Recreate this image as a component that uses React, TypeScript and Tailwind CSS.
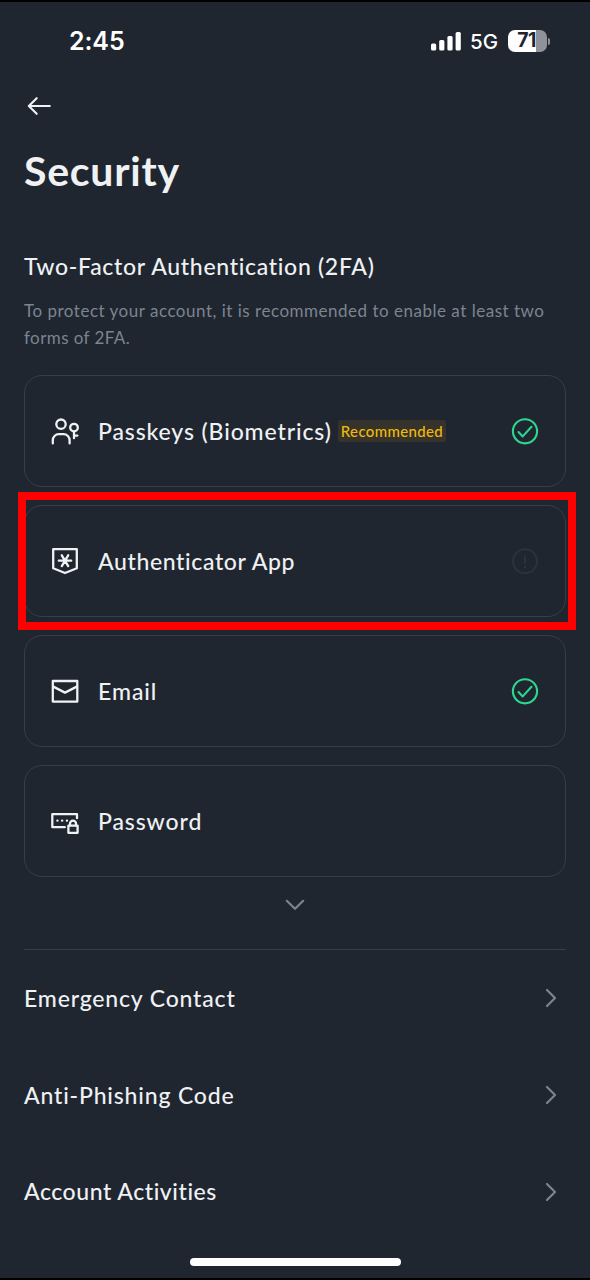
import type { ReactNode } from 'react'

type Status = 'enabled' | 'missing'

type Method = {
  name: string
  nameClass: string
  icon: ReactNode
  badge?: string
  status?: Status
}

const iconProps = {
  width: 32,
  height: 32,
  viewBox: '0 0 32 32',
  fill: 'none',
  stroke: 'currentColor',
  strokeWidth: 2.3,
  className: 'shrink-0',
}

function PasskeyIcon() {
  return (
    <svg {...iconProps} strokeLinecap="round">
      <circle cx="12" cy="9.2" r="4.7" />
      <path d="M3.8 28.4v-3.2a6 6 0 0 1 6-6h4.8a6 6 0 0 1 6 6v3.2" />
      <circle cx="25" cy="12.6" r="3.8" />
      <path d="M25 16.6v6.6M25 20.6h3.4" />
    </svg>
  )
}

function ShieldIcon() {
  return (
    <svg {...iconProps} strokeLinejoin="round">
      <path d="M4.2 4.2h23.6v19L16 28 4.2 23.2z" />
      <path
        d="M9.8 15.7h12.4M12.8 10.3l6.4 10.8M19.2 10.3l-6.4 10.8"
        strokeLinecap="round"
      />
    </svg>
  )
}

function EmailIcon() {
  return (
    <svg {...iconProps} strokeLinejoin="round">
      <path d="M3.8 6h24.5v20.6H3.8z" />
      <path d="M3.8 11.4 16 17.6l12.3-6.2" />
    </svg>
  )
}

function PasswordIcon() {
  return (
    <svg {...iconProps} strokeLinejoin="round" strokeLinecap="round">
      <path d="M15.8 22.2H3.3V9.2h24.7v4" />
      <path d="M8.4 15.6h.1M13.1 15.6h.1M17.9 15.6h.1" strokeWidth="2.4" />
      <path d="M19.4 20.6h9.2v7.2h-9.2z" />
      <path d="M21 20.4v-1.8a3 3 0 0 1 6 0v1.8" />
    </svg>
  )
}

function StatusIcon({ status }: { status: Status }) {
  if (status === 'enabled') {
    return (
      <svg
        viewBox="0 0 28 28"
        fill="none"
        strokeWidth="2.1"
        strokeLinecap="round"
        strokeLinejoin="round"
        className="ml-auto size-7 stroke-[#2fd690]"
      >
        <circle cx="14" cy="14.3" r="12.1" />
        <path d="m7.5 15 4.2 4.4 8.8-9.6" />
      </svg>
    )
  }
  return (
    <svg
      viewBox="0 0 28 28"
      fill="none"
      strokeWidth="2.1"
      className="ml-auto size-7 stroke-[#2c323d]"
    >
      <circle cx="14" cy="14.3" r="12" />
      <path d="M14 8.3v8.4M14 18.9v2" />
    </svg>
  )
}

const methods: Method[] = [
  {
    name: 'Passkeys (Biometrics)',
    nameClass: 'tracking-[0.88px]',
    icon: <PasskeyIcon />,
    badge: 'Recommended',
    status: 'enabled',
  },
  {
    name: 'Authenticator App',
    nameClass: 'tracking-[0.63px]',
    icon: <ShieldIcon />,
    status: 'missing',
  },
  {
    name: 'Email',
    nameClass: 'tracking-[0.95px]',
    icon: <EmailIcon />,
    status: 'enabled',
  },
  { name: 'Password', nameClass: 'tracking-[0.9px]', icon: <PasswordIcon /> },
]

const links = [
  { name: 'Emergency Contact', nameClass: 'tracking-[0.83px]' },
  { name: 'Anti-Phishing Code', nameClass: 'tracking-[0.83px]' },
  { name: 'Account Activities', nameClass: 'tracking-[0.55px]' },
]

function StatusBar() {
  return (
    <div className="flex h-[78px] items-center pr-10 pl-[69px] font-['Inter',sans-serif] text-white">
      <span className="pt-0.5 text-[25px] font-semibold tracking-[-0.1px]">
        2:45
      </span>
      <svg viewBox="0 0 30 20" fill="currentColor" className="ml-auto h-5 w-[30px]">
        <rect x="0" y="12.4" width="5.2" height="7.2" rx="1.5" />
        <rect x="8.2" y="9" width="5.2" height="10.6" rx="1.5" />
        <rect x="16.4" y="5" width="5.2" height="14.6" rx="1.5" />
        <rect x="24.6" y="1" width="5.2" height="18.6" rx="1.5" />
      </svg>
      <span className="ml-[9px] w-[29px] pt-0.5 text-[20.5px]">5G</span>
      <div className="ml-[9px] flex h-[22px] w-[39px] items-center justify-center rounded-[7px] bg-linear-to-r from-white from-[72%] to-[#8f9399] to-[72%] pr-0.5 text-[19.5px] font-bold tracking-[-0.5px] text-[#1f2630]">
        71
      </div>
      <div className="ml-px h-[7px] w-[2px] rounded-r-full bg-[#8f9399]" />
    </div>
  )
}

export default function App() {
  return (
    <div className="relative flex h-[1280px] w-[590px] flex-col border-y-2 border-black bg-[#1f2630] font-['Lato',sans-serif] font-medium text-[#eff1f3]">
      <StatusBar />

      <button type="button" className="mt-3 ml-[27px] w-fit">
        <svg
          viewBox="0 0 26 28"
          fill="none"
          stroke="currentColor"
          strokeWidth="2.1"
          strokeLinecap="round"
          strokeLinejoin="round"
          className="h-7 w-[26px]"
        >
          <path d="M22.8 14H1.8M9.7 6.2 1.8 14l7.9 7.8" />
        </svg>
      </button>

      <main className="flex flex-col px-6">
        <h1 className="mt-[27px] h-12 text-[41px] leading-12 font-bold">
          <span className="tracking-[0.75px]">Security</span>
        </h1>
        <h2 className="mt-[55px] h-8 text-[23px] leading-8">
          <span className="tracking-[0.7px]">Two-Factor Authentication (2FA)</span>
        </h2>
        <p className="mt-[15px] text-[17px] leading-[27px] font-normal whitespace-nowrap text-[#7c8491]">
          <span className="tracking-[0.51px]">
            To protect your account, it is recommended to enable at least two
          </span>
          <br />
          <span className="tracking-[0.42px]">forms of 2FA.</span>
        </p>

        <div className="mt-[24px] flex flex-col gap-[18px]">
          {methods.map(method => (
            <div
              key={method.name}
              className="relative flex h-28 items-center rounded-[18px] border border-[#373e4a] pr-[26px] pl-6"
            >
              {method.icon}
              <span className="ml-[17px] pb-px text-[23px] leading-8 whitespace-nowrap">
                <span className={method.nameClass}>{method.name}</span>
              </span>
              {method.badge && (
                <span className="ml-[6px] h-[22px] rounded-[3px] bg-[#35332c] px-[3px] text-[15px] leading-[22px] text-[#f0b90b]">
                  <span className="tracking-[0.35px]">{method.badge}</span>
                </span>
              )}
              {method.status && <StatusIcon status={method.status} />}
              {method.status === 'missing' && (
                <div className="absolute -top-[14px] -right-[11px] -bottom-[14px] -left-[7px] border-8 border-[#fe0000]" />
              )}
            </div>
          ))}
        </div>

        <svg
          viewBox="0 0 20 12"
          fill="none"
          strokeWidth="2.2"
          strokeLinecap="round"
          strokeLinejoin="round"
          className="mt-[22px] h-3 w-5 self-center stroke-[#7c8491]"
        >
          <path d="m1.8 1.8 8.2 8 8.2-8" />
        </svg>
        <hr className="mt-[38px] border-[#373e4a]" />

        {links.map(link => (
          <button
            key={link.name}
            type="button"
            className="flex h-[96.7px] items-center justify-between text-[23px] leading-8"
          >
            <span className="pb-px">
              <span className={link.nameClass}>{link.name}</span>
            </span>
            <svg
              viewBox="0 0 12 20"
              fill="none"
              strokeWidth="2.2"
              strokeLinecap="round"
              strokeLinejoin="round"
              className="mr-[9px] h-5 w-3 stroke-[#7c8491]"
            >
              <path d="m2 2 8 8-8 8" />
            </svg>
          </button>
        ))}
      </main>

      <div className="mt-auto mb-3 h-2 w-[211px] self-center rounded-full bg-white" />
    </div>
  )
}
